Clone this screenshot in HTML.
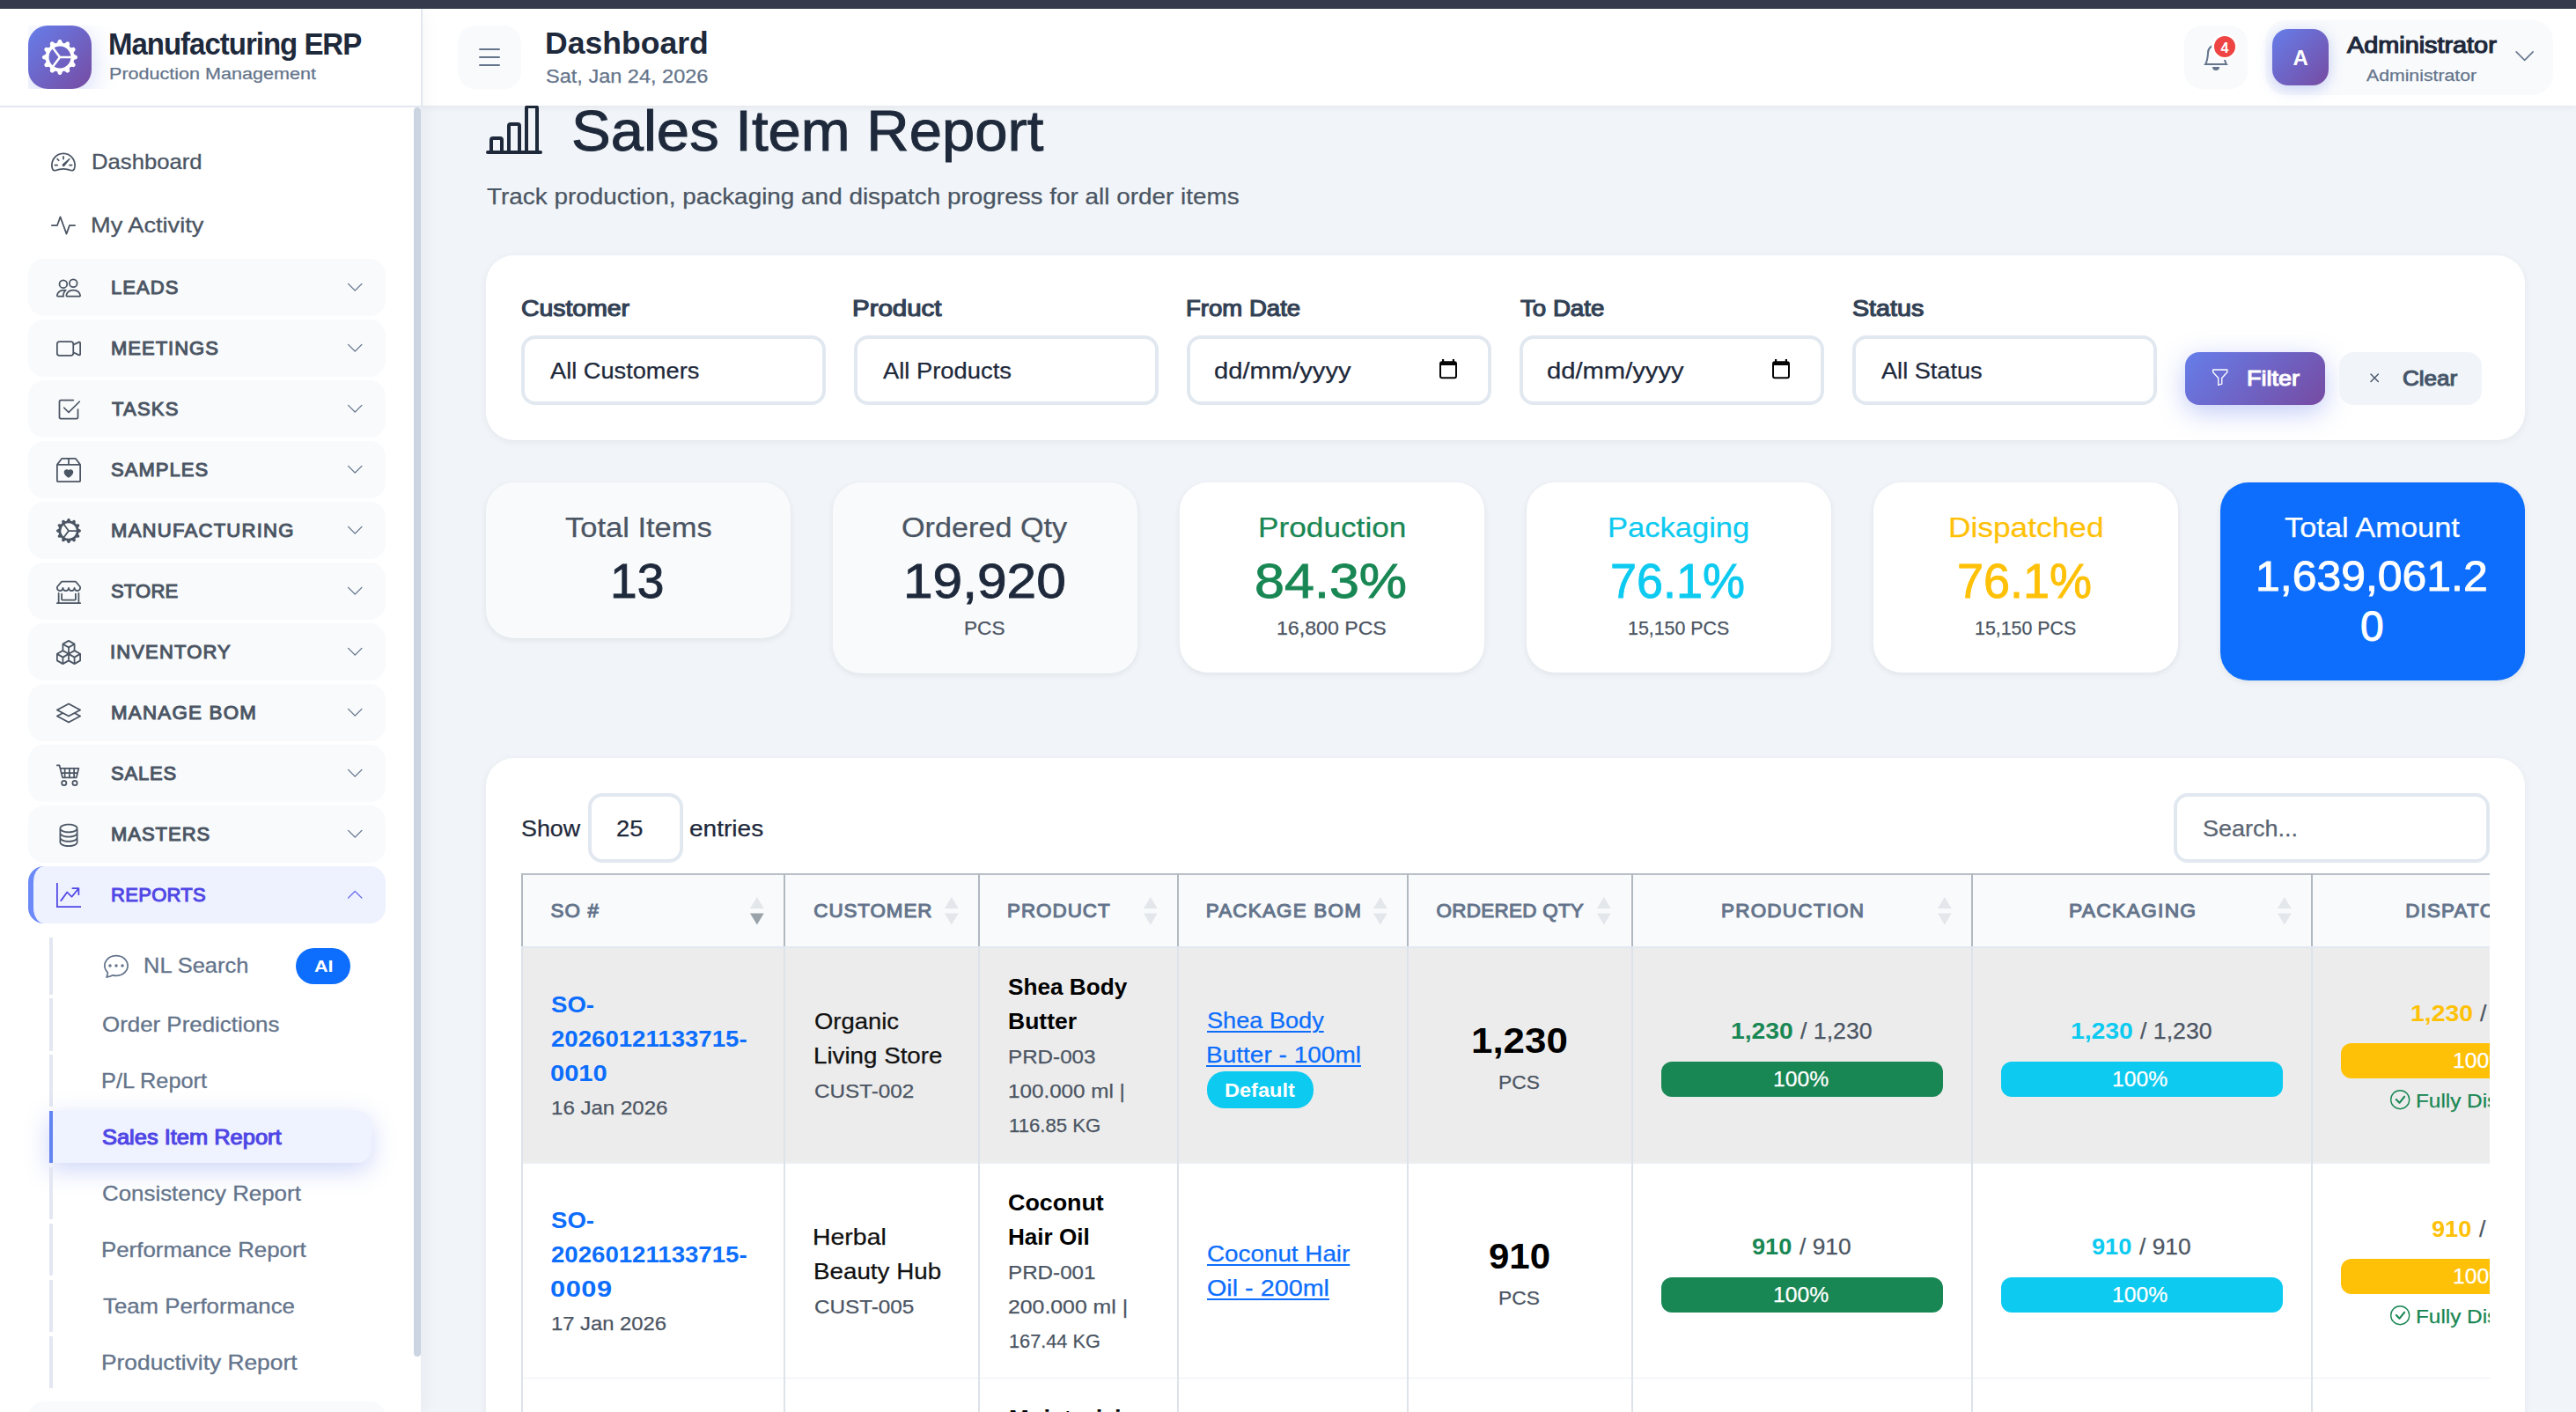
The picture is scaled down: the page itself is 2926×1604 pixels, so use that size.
<!DOCTYPE html>
<html lang="en"><head><meta charset="utf-8"><title>Sales Item Report</title>
<style>
html,body{margin:0;padding:0;}
body{width:2926px;height:1604px;overflow:hidden;position:relative;background:#f1f5f9;font-family:"Liberation Sans",sans-serif;}
.t{position:absolute;white-space:nowrap;transform-origin:0 50%;}
svg{display:block;overflow:visible;}
</style></head><body>
<svg viewBox="0 0 16 16" style="position:absolute;left:552px;top:114.6px;width:64px;height:64px;fill:#1e293b;"><path d="M11 2a1 1 0 0 1 1-1h2a1 1 0 0 1 1 1v12h.5a.5.5 0 0 1 0 1H.5a.5.5 0 0 1 0-1H1v-3a1 1 0 0 1 1-1h2a1 1 0 0 1 1 1v3h1V7a1 1 0 0 1 1-1h2a1 1 0 0 1 1 1v7h1zm1 12h2V2h-2zm-3 0V7H7v7zm-5 0v-3H2v3z"/></svg>
<span class="t" style="left:649.46px;top:117.00px;font-size:64.00px;line-height:64.00px;color:#1e293b;transform:scaleX(1.0472);-webkit-text-stroke:1.0px #1e293b;">Sales Item Report</span>
<span class="t" style="left:553.00px;top:210.00px;font-size:26.40px;line-height:26.40px;color:#4b5563;transform:scaleX(1.0569);-webkit-text-stroke:0.25px #4b5563;">Track production, packaging and dispatch progress for all order items</span>
<div style="position:absolute;left:552px;top:290px;width:2316px;height:210px;background:#fff;border-radius:32px;box-shadow:0 2px 10px rgba(15,23,42,.06);"></div>
<span class="t" style="left:591.59px;top:338.00px;font-size:25.60px;line-height:25.60px;color:#334155;transform:scaleX(1.1091);-webkit-text-stroke:1.17px #334155;">Customer</span>
<div style="position:absolute;left:592px;top:381.2px;width:345.7px;height:78.4px;box-sizing:border-box;border:4px solid #e2e8f0;border-radius:16px;background:#fff;"></div>
<span class="t" style="left:968.40px;top:338.00px;font-size:25.60px;line-height:25.60px;color:#334155;transform:scaleX(1.1512);-webkit-text-stroke:1.17px #334155;">Product</span>
<div style="position:absolute;left:970px;top:381.2px;width:345.7px;height:78.4px;box-sizing:border-box;border:4px solid #e2e8f0;border-radius:16px;background:#fff;"></div>
<span class="t" style="left:1346.55px;top:338.00px;font-size:25.60px;line-height:25.60px;color:#334155;transform:scaleX(1.0763);-webkit-text-stroke:1.17px #334155;">From Date</span>
<div style="position:absolute;left:1348px;top:381.2px;width:345.7px;height:78.4px;box-sizing:border-box;border:4px solid #e2e8f0;border-radius:16px;background:#fff;"></div>
<span class="t" style="left:1726.70px;top:338.00px;font-size:25.60px;line-height:25.60px;color:#334155;transform:scaleX(1.0805);-webkit-text-stroke:1.17px #334155;">To Date</span>
<div style="position:absolute;left:1726px;top:381.2px;width:345.7px;height:78.4px;box-sizing:border-box;border:4px solid #e2e8f0;border-radius:16px;background:#fff;"></div>
<span class="t" style="left:2103.58px;top:338.00px;font-size:25.60px;line-height:25.60px;color:#334155;transform:scaleX(1.1197);-webkit-text-stroke:1.17px #334155;">Status</span>
<div style="position:absolute;left:2104px;top:381.2px;width:345.7px;height:78.4px;box-sizing:border-box;border:4px solid #e2e8f0;border-radius:16px;background:#fff;"></div>
<span class="t" style="left:625.20px;top:409.00px;font-size:25.60px;line-height:25.60px;color:#1e293b;transform:scaleX(1.0629);-webkit-text-stroke:0.25px #1e293b;">All Customers</span>
<span class="t" style="left:1003.40px;top:409.00px;font-size:25.60px;line-height:25.60px;color:#1e293b;transform:scaleX(1.0684);-webkit-text-stroke:0.25px #1e293b;">All Products</span>
<span class="t" style="left:1379.36px;top:409.00px;font-size:25.60px;line-height:25.60px;color:#1e293b;transform:scaleX(1.1397);-webkit-text-stroke:0.25px #1e293b;">dd/mm/yyyy</span>
<span class="t" style="left:1757.36px;top:409.00px;font-size:25.60px;line-height:25.60px;color:#1e293b;transform:scaleX(1.1397);-webkit-text-stroke:0.25px #1e293b;">dd/mm/yyyy</span>
<span class="t" style="left:2136.60px;top:409.00px;font-size:25.60px;line-height:25.60px;color:#1e293b;transform:scaleX(1.0607);-webkit-text-stroke:0.25px #1e293b;">All Status</span>
<svg viewBox="0 0 20 22.2" style="position:absolute;left:1635px;top:407.8px;width:20px;height:22.2px;fill:#050505"><rect x="3" y="0" width="2.2" height="3.5"/><rect x="14.8" y="0" width="2.2" height="3.5"/><path fill-rule="evenodd" d="M3 2.2h14a3 3 0 0 1 3 3v14a3 3 0 0 1-3 3H3a3 3 0 0 1-3-3v-14a3 3 0 0 1 3-3zM2 7v12.2a1 1 0 0 0 1 1h14a1 1 0 0 0 1-1V7z"/></svg>
<svg viewBox="0 0 20 22.2" style="position:absolute;left:2013px;top:407.8px;width:20px;height:22.2px;fill:#050505"><rect x="3" y="0" width="2.2" height="3.5"/><rect x="14.8" y="0" width="2.2" height="3.5"/><path fill-rule="evenodd" d="M3 2.2h14a3 3 0 0 1 3 3v14a3 3 0 0 1-3 3H3a3 3 0 0 1-3-3v-14a3 3 0 0 1 3-3zM2 7v12.2a1 1 0 0 0 1 1h14a1 1 0 0 0 1-1V7z"/></svg>
<div style="position:absolute;left:2482px;top:400px;width:159px;height:60px;background:linear-gradient(135deg,#667eea 0%,#764ba2 100%);border-radius:16px;box-shadow:0 8px 30px rgba(102,126,234,.4);"></div>
<svg viewBox="0 0 16 16" style="position:absolute;left:2511px;top:418px;width:21.5px;height:21.5px;fill:#fff;"><path d="M1.5 1.5A.5.5 0 0 1 2 1h12a.5.5 0 0 1 .5.5v2a.5.5 0 0 1-.128.334L10 8.692V13.5a.5.5 0 0 1-.342.474l-3 1A.5.5 0 0 1 6 14.5V8.692L1.628 3.834A.5.5 0 0 1 1.500 3.500zm1 .5v1.308l4.372 4.858A.5.5 0 0 1 7 8.500v5.306l2-.666V8.500a.5.5 0 0 1 .128-.334L13.500 3.308V2z"/></svg>
<span class="t" style="left:2552.45px;top:418.00px;font-size:24.00px;line-height:24.00px;color:#fff;transform:scaleX(1.1235);-webkit-text-stroke:1.11px #fff;">Filter</span>
<div style="position:absolute;left:2657px;top:400px;width:162px;height:60px;background:#f1f5f9;border-radius:16px;"></div>
<svg viewBox="0 0 16 16" style="position:absolute;left:2685.5px;top:418.3px;width:22.4px;height:22.4px;fill:#475569;"><path d="M4.646 4.646a.5.5 0 0 1 .708 0L8 7.293l2.646-2.647a.5.5 0 0 1 .708.708L8.707 8l2.647 2.646a.5.5 0 0 1-.708.708L8 8.707l-2.646 2.647a.5.5 0 0 1-.708-.708L7.293 8 4.646 5.354a.5.5 0 0 1 0-.708"/></svg>
<span class="t" style="left:2728.51px;top:418.00px;font-size:24.00px;line-height:24.00px;color:#475569;transform:scaleX(1.0857);-webkit-text-stroke:1.11px #475569;">Clear</span>
<div style="position:absolute;left:552px;top:548px;width:345.7px;height:177px;background:#f8fafc;border-radius:32px;box-shadow:0 2px 7px rgba(15,23,42,.08);"></div>
<div style="position:absolute;left:946px;top:548px;width:345.7px;height:216.5px;background:#f8fafc;border-radius:32px;box-shadow:0 2px 7px rgba(15,23,42,.08);"></div>
<div style="position:absolute;left:1340.3px;top:548px;width:345.7px;height:215.7px;background:#fff;border-radius:32px;box-shadow:0 2px 7px rgba(15,23,42,.08);"></div>
<div style="position:absolute;left:1734.2px;top:548px;width:345.7px;height:215.7px;background:#fff;border-radius:32px;box-shadow:0 2px 7px rgba(15,23,42,.08);"></div>
<div style="position:absolute;left:2128.2px;top:548px;width:345.7px;height:215.7px;background:#fff;border-radius:32px;box-shadow:0 2px 7px rgba(15,23,42,.08);"></div>
<div style="position:absolute;left:2522px;top:548px;width:345.7px;height:224.6px;background:#0d6efd;border-radius:32px;box-shadow:0 2px 7px rgba(15,23,42,.08);"></div>
<span class="t" style="left:642.30px;top:583.00px;font-size:32.00px;line-height:32.00px;color:#4b5563;transform:scaleX(1.0779);-webkit-text-stroke:0.25px #4b5563;">Total Items</span>
<span class="t" style="left:692.66px;top:632.00px;font-size:56.00px;line-height:56.00px;color:#1e293b;transform:scaleX(0.9857);-webkit-text-stroke:0.9px #1e293b;">13</span>
<span class="t" style="left:1024.43px;top:583.00px;font-size:32.00px;line-height:32.00px;color:#4b5563;transform:scaleX(1.0686);-webkit-text-stroke:0.25px #4b5563;">Ordered Qty</span>
<span class="t" style="left:1025.68px;top:632.00px;font-size:56.00px;line-height:56.00px;color:#1e293b;transform:scaleX(1.0788);-webkit-text-stroke:0.9px #1e293b;">19,920</span>
<span class="t" style="left:1095.28px;top:703.00px;font-size:22.40px;line-height:22.40px;color:#4b5563;transform:scaleX(1.0093);-webkit-text-stroke:0.25px #4b5563;">PCS</span>
<span class="t" style="left:1428.80px;top:583.00px;font-size:32.00px;line-height:32.00px;color:#198754;transform:scaleX(1.1007);-webkit-text-stroke:0.25px #198754;">Production</span>
<span class="t" style="left:1424.82px;top:632.00px;font-size:56.00px;line-height:56.00px;color:#198754;transform:scaleX(1.0903);-webkit-text-stroke:0.9px #198754;">84.3%</span>
<span class="t" style="left:1449.97px;top:703.00px;font-size:22.40px;line-height:22.40px;color:#4b5563;transform:scaleX(1.0336);-webkit-text-stroke:0.25px #4b5563;">16,800 PCS</span>
<span class="t" style="left:1826.39px;top:583.00px;font-size:32.00px;line-height:32.00px;color:#0dcaf0;transform:scaleX(1.0788);-webkit-text-stroke:0.25px #0dcaf0;">Packaging</span>
<span class="t" style="left:1828.66px;top:632.00px;font-size:56.00px;line-height:56.00px;color:#0dcaf0;transform:scaleX(0.9643);-webkit-text-stroke:0.9px #0dcaf0;">76.1%</span>
<span class="t" style="left:1849.05px;top:703.00px;font-size:22.40px;line-height:22.40px;color:#4b5563;transform:scaleX(0.9546);-webkit-text-stroke:0.25px #4b5563;">15,150 PCS</span>
<span class="t" style="left:2212.79px;top:583.00px;font-size:32.00px;line-height:32.00px;color:#ffc107;transform:scaleX(1.1026);-webkit-text-stroke:0.25px #ffc107;">Dispatched</span>
<span class="t" style="left:2222.66px;top:632.00px;font-size:56.00px;line-height:56.00px;color:#ffc107;transform:scaleX(0.9643);-webkit-text-stroke:0.9px #ffc107;">76.1%</span>
<span class="t" style="left:2243.05px;top:703.00px;font-size:22.40px;line-height:22.40px;color:#4b5563;transform:scaleX(0.9546);-webkit-text-stroke:0.25px #4b5563;">15,150 PCS</span>
<span class="t" style="left:2594.90px;top:583.00px;font-size:32.00px;line-height:32.00px;color:#fff;transform:scaleX(1.0749);-webkit-text-stroke:0.25px #fff;">Total Amount</span>
<span class="t" style="left:2561.88px;top:631.00px;font-size:48.00px;line-height:48.00px;color:#fff;transform:scaleX(1.0402);-webkit-text-stroke:0.9px #fff;">1,639,061.2</span>
<span class="t" style="left:2681.00px;top:688.00px;font-size:48.00px;line-height:48.00px;color:#fff;-webkit-text-stroke:0.9px #fff;">0</span>
<div style="position:absolute;left:552px;top:860.6px;width:2316px;height:800px;background:#fff;border-radius:32px;box-shadow:0 2px 10px rgba(15,23,42,.06);"></div>
<span class="t" style="left:591.95px;top:929.00px;font-size:25.60px;line-height:25.60px;color:#1e293b;transform:scaleX(1.0476);-webkit-text-stroke:0.25px #1e293b;">Show</span>
<div style="position:absolute;left:668px;top:901px;width:108px;height:79px;box-sizing:border-box;border:4px solid #e2e8f0;border-radius:16px;background:#fff;"></div>
<span class="t" style="left:699.83px;top:929.00px;font-size:25.60px;line-height:25.60px;color:#1e293b;transform:scaleX(1.0667);-webkit-text-stroke:0.25px #1e293b;">25</span>
<span class="t" style="left:782.70px;top:929.00px;font-size:25.60px;line-height:25.60px;color:#1e293b;transform:scaleX(1.0960);-webkit-text-stroke:0.25px #1e293b;">entries</span>
<div style="position:absolute;left:2469.2px;top:901px;width:358.6px;height:79px;box-sizing:border-box;border:4px solid #e2e8f0;border-radius:16px;background:#fff;"></div>
<span class="t" style="left:2501.54px;top:929.00px;font-size:25.60px;line-height:25.60px;color:#5b6573;transform:scaleX(1.0556);-webkit-text-stroke:0.25px #5b6573;">Search...</span>
<div style="position:absolute;left:592px;top:992px;width:2236px;height:620px;overflow:hidden;">
<div style="position:absolute;left:0px;top:0px;width:2500px;height:83.4px;background:#f8fafc;"></div>
<div style="position:absolute;left:0px;top:83.4px;width:2500px;height:245.1px;background:#ececec;"></div>
<div style="position:absolute;left:0px;top:328.5px;width:2500px;height:244.5px;background:#fff;"></div>
<div style="position:absolute;left:0px;top:573px;width:2500px;height:245px;background:#fff;"></div>
<div style="position:absolute;left:0px;top:328.1px;width:2500px;height:1.7px;background:#eceff4;"></div>
<div style="position:absolute;left:0px;top:572.6px;width:2500px;height:1.7px;background:#eceff4;"></div>
<div style="position:absolute;left:0px;top:817.6px;width:2500px;height:1.7px;background:#eceff4;"></div>
<div style="position:absolute;left:0px;top:0.2px;width:2500px;height:2px;background:#b9c0c7;"></div>
<div style="position:absolute;left:0px;top:83px;width:2500px;height:2px;background:#e2e8f0;"></div>
<div style="position:absolute;left:0px;top:0px;width:2px;height:83px;background:#b2b9c1;"></div>
<div style="position:absolute;left:0px;top:85px;width:2px;height:600px;background:#dde3ea;"></div>
<div style="position:absolute;left:298px;top:0px;width:2px;height:83px;background:#b2b9c1;"></div>
<div style="position:absolute;left:298px;top:85px;width:2px;height:600px;background:#dde3ea;"></div>
<div style="position:absolute;left:519px;top:0px;width:2px;height:83px;background:#b2b9c1;"></div>
<div style="position:absolute;left:519px;top:85px;width:2px;height:600px;background:#dde3ea;"></div>
<div style="position:absolute;left:745px;top:0px;width:2px;height:83px;background:#b2b9c1;"></div>
<div style="position:absolute;left:745px;top:85px;width:2px;height:600px;background:#dde3ea;"></div>
<div style="position:absolute;left:1006.2px;top:0px;width:2px;height:83px;background:#b2b9c1;"></div>
<div style="position:absolute;left:1006.2px;top:85px;width:2px;height:600px;background:#dde3ea;"></div>
<div style="position:absolute;left:1261.4px;top:0px;width:2px;height:83px;background:#b2b9c1;"></div>
<div style="position:absolute;left:1261.4px;top:85px;width:2px;height:600px;background:#dde3ea;"></div>
<div style="position:absolute;left:1647.2px;top:0px;width:2px;height:83px;background:#b2b9c1;"></div>
<div style="position:absolute;left:1647.2px;top:85px;width:2px;height:600px;background:#dde3ea;"></div>
<div style="position:absolute;left:2033px;top:0px;width:2px;height:83px;background:#b2b9c1;"></div>
<div style="position:absolute;left:2033px;top:85px;width:2px;height:600px;background:#dde3ea;"></div>
<div style="position:absolute;left:2420px;top:0px;width:2px;height:83px;background:#b2b9c1;"></div>
<div style="position:absolute;left:2420px;top:85px;width:2px;height:600px;background:#dde3ea;"></div>
</div>
<span class="t" style="left:625.40px;top:1024.00px;font-size:22.40px;line-height:22.40px;color:#64748b;letter-spacing:1.200px;-webkit-text-stroke:1.06px #64748b;">SO #</span>
<svg viewBox="0 0 15.7 32" style="position:absolute;left:852.3px;top:1018.7px;width:15.7px;height:32px"><path d="M7.85 0 L15.7 13.1 L0 13.1Z" fill="#e3e6ea"/><path d="M0 18.4 L15.7 18.4 L7.85 31.6Z" fill="#9aa2a9"/></svg>
<span class="t" style="left:924.30px;top:1024.00px;font-size:22.40px;line-height:22.40px;color:#64748b;letter-spacing:0.914px;-webkit-text-stroke:1.06px #64748b;">CUSTOMER</span>
<svg viewBox="0 0 15.7 32" style="position:absolute;left:1072.9px;top:1018.7px;width:15.7px;height:32px"><path d="M7.85 0 L15.7 13.1 L0 13.1Z" fill="#e3e6ea"/><path d="M0 18.4 L15.7 18.4 L7.85 31.6Z" fill="#e3e6ea"/></svg>
<span class="t" style="left:1144.00px;top:1024.00px;font-size:22.40px;line-height:22.40px;color:#64748b;letter-spacing:1.000px;-webkit-text-stroke:1.06px #64748b;">PRODUCT</span>
<svg viewBox="0 0 15.7 32" style="position:absolute;left:1299.1px;top:1018.7px;width:15.7px;height:32px"><path d="M7.85 0 L15.7 13.1 L0 13.1Z" fill="#e3e6ea"/><path d="M0 18.4 L15.7 18.4 L7.85 31.6Z" fill="#e3e6ea"/></svg>
<span class="t" style="left:1369.70px;top:1024.00px;font-size:22.40px;line-height:22.40px;color:#64748b;letter-spacing:1.232px;-webkit-text-stroke:1.06px #64748b;">PACKAGE BOM</span>
<svg viewBox="0 0 15.7 32" style="position:absolute;left:1559.9px;top:1018.7px;width:15.7px;height:32px"><path d="M7.85 0 L15.7 13.1 L0 13.1Z" fill="#e3e6ea"/><path d="M0 18.4 L15.7 18.4 L7.85 31.6Z" fill="#e3e6ea"/></svg>
<span class="t" style="left:1631.60px;top:1024.00px;font-size:22.40px;line-height:22.40px;color:#64748b;letter-spacing:0.300px;-webkit-text-stroke:1.06px #64748b;">ORDERED QTY</span>
<svg viewBox="0 0 15.7 32" style="position:absolute;left:1814.3px;top:1018.7px;width:15.7px;height:32px"><path d="M7.85 0 L15.7 13.1 L0 13.1Z" fill="#e3e6ea"/><path d="M0 18.4 L15.7 18.4 L7.85 31.6Z" fill="#e3e6ea"/></svg>
<span class="t" style="left:1954.99px;top:1024.00px;font-size:22.40px;line-height:22.40px;color:#64748b;letter-spacing:1.232px;transform:scaleX(1.0026);-webkit-text-stroke:1.06px #64748b;">PRODUCTION</span>
<svg viewBox="0 0 15.7 32" style="position:absolute;left:2200.8px;top:1018.7px;width:15.7px;height:32px"><path d="M7.85 0 L15.7 13.1 L0 13.1Z" fill="#e3e6ea"/><path d="M0 18.4 L15.7 18.4 L7.85 31.6Z" fill="#e3e6ea"/></svg>
<span class="t" style="left:2349.96px;top:1024.00px;font-size:22.40px;line-height:22.40px;color:#64748b;letter-spacing:1.232px;transform:scaleX(1.0199);-webkit-text-stroke:1.06px #64748b;">PACKAGING</span>
<svg viewBox="0 0 15.7 32" style="position:absolute;left:2586.5px;top:1018.7px;width:15.7px;height:32px"><path d="M7.85 0 L15.7 13.1 L0 13.1Z" fill="#e3e6ea"/><path d="M0 18.4 L15.7 18.4 L7.85 31.6Z" fill="#e3e6ea"/></svg>
<div style="position:absolute;left:2627px;top:994px;width:201px;height:620px;overflow:hidden;">
<span class="t" style="left:105.30px;top:30.00px;font-size:22.40px;line-height:22.40px;color:#64748b;letter-spacing:1.156px;-webkit-text-stroke:1.06px #64748b;">DISPATCHED</span>
</div>
<span class="t" style="left:625.52px;top:1129.00px;font-size:25.60px;line-height:25.60px;color:#0d6efd;font-weight:700;transform:scaleX(1.0773);">SO-</span>
<span class="t" style="left:625.52px;top:1168.00px;font-size:25.60px;line-height:25.60px;color:#0d6efd;font-weight:700;transform:scaleX(1.0785);">20260121133715-</span>
<span class="t" style="left:625.46px;top:1207.00px;font-size:25.60px;line-height:25.60px;color:#0d6efd;font-weight:700;transform:scaleX(1.1364);">0010</span>
<span class="t" style="left:625.53px;top:1248.00px;font-size:22.40px;line-height:22.40px;color:#4b5563;transform:scaleX(1.0744);-webkit-text-stroke:0.25px #4b5563;">16 Jan 2026</span>
<span class="t" style="left:924.53px;top:1148.00px;font-size:25.60px;line-height:25.60px;color:#111;transform:scaleX(1.0716);-webkit-text-stroke:0.25px #111;">Organic</span>
<span class="t" style="left:923.83px;top:1187.00px;font-size:25.60px;line-height:25.60px;color:#111;transform:scaleX(1.0833);-webkit-text-stroke:0.25px #111;">Living Store</span>
<span class="t" style="left:924.52px;top:1229.00px;font-size:22.40px;line-height:22.40px;color:#4b5563;transform:scaleX(1.0835);-webkit-text-stroke:0.25px #4b5563;">CUST-002</span>
<span class="t" style="left:1144.98px;top:1109.00px;font-size:25.60px;line-height:25.60px;color:#000;font-weight:700;transform:scaleX(1.0229);">Shea Body</span>
<span class="t" style="left:1145.46px;top:1148.00px;font-size:25.60px;line-height:25.60px;color:#000;font-weight:700;transform:scaleX(1.0365);">Butter</span>
<span class="t" style="left:1144.64px;top:1190.00px;font-size:22.40px;line-height:22.40px;color:#4b5563;transform:scaleX(1.0809);-webkit-text-stroke:0.25px #4b5563;">PRD-003</span>
<span class="t" style="left:1145.42px;top:1229.00px;font-size:22.40px;line-height:22.40px;color:#4b5563;transform:scaleX(1.0817);-webkit-text-stroke:0.25px #4b5563;">100.000 ml |</span>
<span class="t" style="left:1145.51px;top:1268.00px;font-size:22.40px;line-height:22.40px;color:#4b5563;transform:scaleX(0.9883);-webkit-text-stroke:0.25px #4b5563;">116.85 KG</span>
<span class="t" style="left:1370.74px;top:1147.00px;font-size:25.60px;line-height:25.60px;color:#0d6efd;transform:scaleX(1.0597);-webkit-text-stroke:0.25px #0d6efd;text-decoration:underline;text-decoration-thickness:2.2px;text-underline-offset:2.5px;">Shea Body</span>
<span class="t" style="left:1369.61px;top:1186.00px;font-size:25.60px;line-height:25.60px;color:#0d6efd;transform:scaleX(1.0949);-webkit-text-stroke:0.25px #0d6efd;text-decoration:underline;text-decoration-thickness:2.2px;text-underline-offset:2.5px;">Butter - 100ml</span>
<div style="position:absolute;left:1371px;top:1216.9px;width:121.1px;height:42.4px;background:#0dcaf0;border-radius:20px;"></div>
<span class="t" style="left:1391.05px;top:1228.00px;font-size:22.40px;line-height:22.40px;color:#fff;font-weight:700;transform:scaleX(1.0520);">Default</span>
<span class="t" style="left:1670.71px;top:1162.00px;font-size:40.00px;line-height:40.00px;color:#000;font-weight:700;transform:scaleX(1.0969);">1,230</span>
<span class="t" style="left:1702.26px;top:1219.00px;font-size:22.40px;line-height:22.40px;color:#4b5563;transform:scaleX(1.0186);-webkit-text-stroke:0.25px #4b5563;">PCS</span>
<span class="t" style="left:1965.94px;top:1159.00px;font-size:25.60px;line-height:25.60px;color:#198754;font-weight:700;transform:scaleX(1.1065);">1,230</span>
<span class="t" style="left:2044.85px;top:1159.00px;font-size:25.60px;line-height:25.60px;color:#4b5563;transform:scaleX(1.0423);-webkit-text-stroke:0.25px #4b5563;">/ 1,230</span>
<div style="position:absolute;left:1886.7px;top:1205.9px;width:320.5px;height:40px;background:#198754;border-radius:12px;"></div>
<span class="t" style="left:2013.54px;top:1214.00px;font-size:24.00px;line-height:24.00px;color:#fff;transform:scaleX(1.0305);-webkit-text-stroke:0.25px #fff;">100%</span>
<span class="t" style="left:2351.74px;top:1159.00px;font-size:25.60px;line-height:25.60px;color:#0dcaf0;font-weight:700;transform:scaleX(1.1065);">1,230</span>
<span class="t" style="left:2430.65px;top:1159.00px;font-size:25.60px;line-height:25.60px;color:#4b5563;transform:scaleX(1.0423);-webkit-text-stroke:0.25px #4b5563;">/ 1,230</span>
<div style="position:absolute;left:2272.5px;top:1205.9px;width:320.5px;height:40px;background:#0dcaf0;border-radius:12px;"></div>
<span class="t" style="left:2399.34px;top:1214.00px;font-size:24.00px;line-height:24.00px;color:#fff;transform:scaleX(1.0305);-webkit-text-stroke:0.25px #fff;">100%</span>
<span class="t" style="left:625.52px;top:1374.00px;font-size:25.60px;line-height:25.60px;color:#0d6efd;font-weight:700;transform:scaleX(1.0773);">SO-</span>
<span class="t" style="left:625.52px;top:1413.00px;font-size:25.60px;line-height:25.60px;color:#0d6efd;font-weight:700;transform:scaleX(1.0785);">20260121133715-</span>
<span class="t" style="left:625.40px;top:1452.00px;font-size:25.60px;line-height:25.60px;color:#0d6efd;font-weight:700;letter-spacing:0.500px;transform:scaleX(1.2000);">0009</span>
<span class="t" style="left:625.54px;top:1493.00px;font-size:22.40px;line-height:22.40px;color:#4b5563;transform:scaleX(1.0636);-webkit-text-stroke:0.25px #4b5563;">17 Jan 2026</span>
<span class="t" style="left:923.38px;top:1393.00px;font-size:25.60px;line-height:25.60px;color:#111;transform:scaleX(1.1111);-webkit-text-stroke:0.25px #111;">Herbal</span>
<span class="t" style="left:923.83px;top:1432.00px;font-size:25.60px;line-height:25.60px;color:#111;transform:scaleX(1.0847);-webkit-text-stroke:0.25px #111;">Beauty Hub</span>
<span class="t" style="left:924.52px;top:1474.00px;font-size:22.40px;line-height:22.40px;color:#4b5563;transform:scaleX(1.0835);-webkit-text-stroke:0.25px #4b5563;">CUST-005</span>
<span class="t" style="left:1144.95px;top:1354.00px;font-size:25.60px;line-height:25.60px;color:#000;font-weight:700;transform:scaleX(1.0485);">Coconut</span>
<span class="t" style="left:1145.48px;top:1393.00px;font-size:25.60px;line-height:25.60px;color:#000;font-weight:700;transform:scaleX(1.0191);">Hair Oil</span>
<span class="t" style="left:1144.64px;top:1435.00px;font-size:22.40px;line-height:22.40px;color:#4b5563;transform:scaleX(1.0809);-webkit-text-stroke:0.25px #4b5563;">PRD-001</span>
<span class="t" style="left:1145.39px;top:1474.00px;font-size:22.40px;line-height:22.40px;color:#4b5563;transform:scaleX(1.1083);-webkit-text-stroke:0.25px #4b5563;">200.000 ml |</span>
<span class="t" style="left:1145.53px;top:1513.00px;font-size:22.40px;line-height:22.40px;color:#4b5563;transform:scaleX(0.9695);-webkit-text-stroke:0.25px #4b5563;">167.44 KG</span>
<span class="t" style="left:1370.71px;top:1412.00px;font-size:25.60px;line-height:25.60px;color:#0d6efd;transform:scaleX(1.0865);-webkit-text-stroke:0.25px #0d6efd;text-decoration:underline;text-decoration-thickness:2.2px;text-underline-offset:2.5px;">Coconut Hair</span>
<span class="t" style="left:1370.68px;top:1451.00px;font-size:25.60px;line-height:25.60px;color:#0d6efd;transform:scaleX(1.1231);-webkit-text-stroke:0.25px #0d6efd;text-decoration:underline;text-decoration-thickness:2.2px;text-underline-offset:2.5px;">Oil - 200ml</span>
<span class="t" style="left:1691.45px;top:1407.00px;font-size:40.00px;line-height:40.00px;color:#000;font-weight:700;transform:scaleX(1.0500);">910</span>
<span class="t" style="left:1702.26px;top:1464.00px;font-size:22.40px;line-height:22.40px;color:#4b5563;transform:scaleX(1.0186);-webkit-text-stroke:0.25px #4b5563;">PCS</span>
<span class="t" style="left:1990.39px;top:1404.00px;font-size:25.60px;line-height:25.60px;color:#198754;font-weight:700;transform:scaleX(1.0610);">910</span>
<span class="t" style="left:2044.15px;top:1404.00px;font-size:25.60px;line-height:25.60px;color:#4b5563;transform:scaleX(1.0286);-webkit-text-stroke:0.25px #4b5563;">/ 910</span>
<div style="position:absolute;left:1886.7px;top:1450.9px;width:320.5px;height:40px;background:#198754;border-radius:12px;"></div>
<span class="t" style="left:2013.54px;top:1459.00px;font-size:24.00px;line-height:24.00px;color:#fff;transform:scaleX(1.0305);-webkit-text-stroke:0.25px #fff;">100%</span>
<span class="t" style="left:2376.19px;top:1404.00px;font-size:25.60px;line-height:25.60px;color:#0dcaf0;font-weight:700;transform:scaleX(1.0610);">910</span>
<span class="t" style="left:2429.95px;top:1404.00px;font-size:25.60px;line-height:25.60px;color:#4b5563;transform:scaleX(1.0286);-webkit-text-stroke:0.25px #4b5563;">/ 910</span>
<div style="position:absolute;left:2272.5px;top:1450.9px;width:320.5px;height:40px;background:#0dcaf0;border-radius:12px;"></div>
<span class="t" style="left:2399.34px;top:1459.00px;font-size:24.00px;line-height:24.00px;color:#fff;transform:scaleX(1.0305);-webkit-text-stroke:0.25px #fff;">100%</span>
<div style="position:absolute;left:2627px;top:1076px;width:201px;height:560px;overflow:hidden;">
<span class="t" style="left:110.79px;top:63.00px;font-size:25.60px;line-height:25.60px;color:#ffc107;font-weight:700;transform:scaleX(1.1097);">1,230</span>
<span class="t" style="left:189.90px;top:63.00px;font-size:25.60px;line-height:25.60px;color:#4b5563;transform:scaleX(1.0410);-webkit-text-stroke:0.25px #4b5563;">/ 1,230</span>
<div style="position:absolute;left:32.1px;top:108.7px;width:319px;height:40.3px;background:#ffc107;border-radius:12px;"></div>
<span class="t" style="left:159.04px;top:117.00px;font-size:24.00px;line-height:24.00px;color:#fff;transform:scaleX(1.0305);-webkit-text-stroke:0.25px #fff;">100%</span>
<svg viewBox="0 0 16 16" style="position:absolute;left:88.2px;top:162.3px;width:22.4px;height:22.4px;fill:#198754"><path d="M8 15A7 7 0 1 1 8 1a7 7 0 0 1 0 14m0 1A8 8 0 1 0 8 0a8 8 0 0 0 0 16"/><path d="m10.970 4.970-.02.022-3.473 4.425-2.093-2.094a.75.75 0 0 0-1.060 1.060L6.970 11.030a.75.75 0 0 0 1.079-.020l3.992-4.990a.75.75 0 0 0-1.071-1.050"/></svg>
<span class="t" style="left:116.63px;top:164.00px;font-size:22.40px;line-height:22.40px;color:#198754;transform:scaleX(1.0864);-webkit-text-stroke:0.25px #198754;">Fully Dispatched</span>
<span class="t" style="left:135.29px;top:308.00px;font-size:25.60px;line-height:25.60px;color:#ffc107;font-weight:700;transform:scaleX(1.0610);">910</span>
<span class="t" style="left:189.05px;top:308.00px;font-size:25.60px;line-height:25.60px;color:#4b5563;transform:scaleX(1.0286);-webkit-text-stroke:0.25px #4b5563;">/ 910</span>
<div style="position:absolute;left:32.1px;top:353.7px;width:319px;height:40.3px;background:#ffc107;border-radius:12px;"></div>
<span class="t" style="left:159.04px;top:362.00px;font-size:24.00px;line-height:24.00px;color:#fff;transform:scaleX(1.0305);-webkit-text-stroke:0.25px #fff;">100%</span>
<svg viewBox="0 0 16 16" style="position:absolute;left:88.2px;top:407.3px;width:22.4px;height:22.4px;fill:#198754"><path d="M8 15A7 7 0 1 1 8 1a7 7 0 0 1 0 14m0 1A8 8 0 1 0 8 0a8 8 0 0 0 0 16"/><path d="m10.970 4.970-.02.022-3.473 4.425-2.093-2.094a.75.75 0 0 0-1.060 1.060L6.970 11.030a.75.75 0 0 0 1.079-.020l3.992-4.990a.75.75 0 0 0-1.071-1.050"/></svg>
<span class="t" style="left:116.63px;top:409.00px;font-size:22.40px;line-height:22.40px;color:#198754;transform:scaleX(1.0864);-webkit-text-stroke:0.25px #198754;">Fully Dispatched</span>
</div>
<span class="t" style="left:1145.93px;top:1599.00px;font-size:25.60px;line-height:25.60px;color:#000;font-weight:700;transform:scaleX(1.0676);">Moisturizing</span>
<div style="position:absolute;left:480px;top:10px;width:2446px;height:110px;background:#fff;box-shadow:0 2px 8px rgba(15,23,42,.06);"></div>
<div style="position:absolute;left:520px;top:29px;width:72px;height:72px;background:#f8fafc;border-radius:20px;"></div>
<div style="position:absolute;left:544px;top:54.5px;width:24px;height:2.2px;background:#64748b;border-radius:1px;"></div>
<div style="position:absolute;left:544px;top:63.9px;width:24px;height:2.2px;background:#64748b;border-radius:1px;"></div>
<div style="position:absolute;left:544px;top:73.2px;width:24px;height:2.2px;background:#64748b;border-radius:1px;"></div>
<span class="t" style="left:618.98px;top:31.00px;font-size:35.20px;line-height:35.20px;color:#1e293b;font-weight:700;transform:scaleX(1.0111);">Dashboard</span>
<span class="t" style="left:619.91px;top:76.00px;font-size:21.60px;line-height:21.60px;color:#64748b;transform:scaleX(1.0893);-webkit-text-stroke:0.25px #64748b;">Sat, Jan 24, 2026</span>
<div style="position:absolute;left:2481px;top:29px;width:72px;height:72px;background:#f8fafc;border-radius:20px;"></div>
<svg viewBox="0 0 16 16" style="position:absolute;left:2501px;top:47.7px;width:32px;height:32px;fill:#64748b;"><path d="M8 16a2 2 0 0 0 2-2H6a2 2 0 0 0 2 2M8 1.918l-.797.161A4 4 0 0 0 4 6c0 .628-.134 2.197-.459 3.742-.16.767-.376 1.566-.663 2.258h10.244c-.287-.692-.502-1.49-.663-2.258C12.134 8.197 12 6.628 12 6a4 4 0 0 0-3.203-3.92zM14.22 12c.223.447.481.801.78 1H1c.299-.199.557-.553.78-1C2.68 10.2 3 6.88 3 6c0-2.42 1.72-4.44 4.005-4.901a1 1 0 1 1 1.99 0A5 5 0 0 1 13 6c0 .88.32 4.2 1.22 6"/></svg>
<div style="position:absolute;left:2512px;top:38px;width:30px;height:30px;background:#ef4444;border:3px solid #fff;border-radius:50%;box-sizing:border-box;"></div>
<span class="t" style="left:2522.50px;top:47.00px;font-size:16.00px;line-height:16.00px;color:#fff;font-weight:700;">4</span>
<div style="position:absolute;left:2573px;top:23px;width:327px;height:84.6px;background:#f8fafc;border-radius:24px;"></div>
<div style="position:absolute;left:2581px;top:33px;width:64px;height:64px;background:linear-gradient(135deg,#667eea 0%,#764ba2 100%);border-radius:18px;box-shadow:0 4px 16px rgba(102,126,234,.35);"></div>
<span class="t" style="left:2604.50px;top:54.00px;font-size:24.00px;line-height:24.00px;color:#fff;font-weight:700;">A</span>
<span class="t" style="left:2665.70px;top:39.00px;font-size:25.60px;line-height:25.60px;color:#1e293b;transform:scaleX(1.1258);-webkit-text-stroke:1.17px #1e293b;">Administrator</span>
<span class="t" style="left:2688.00px;top:76.00px;font-size:19.20px;line-height:19.20px;color:#64748b;transform:scaleX(1.1062);-webkit-text-stroke:0.25px #64748b;">Administrator</span>
<svg viewBox="0 0 16 16" style="position:absolute;left:2855.4px;top:51px;width:25.3px;height:25.3px;fill:#64748b;"><path fill-rule="evenodd" d="M1.646 4.646a.5.5 0 0 1 .708 0L8 10.293l5.646-5.647a.5.5 0 0 1 .708.708l-6 6a.5.5 0 0 1-.708 0l-6-6a.5.5 0 0 1 0-.708"/></svg>
<div style="position:absolute;left:0;top:10px;width:478px;height:1594px;background:#fff;box-shadow:4px 0 18px rgba(15,23,42,.045);"></div>
<div style="position:absolute;left:478px;top:10px;width:2px;height:112px;background:#e2e8f0;"></div>
<div style="position:absolute;left:0px;top:120px;width:478px;height:2px;background:#e2e8f0;"></div>
<div style="position:absolute;left:32px;top:29px;width:103px;height:72px;overflow:hidden;"><div style="width:72px;height:72px;background:linear-gradient(135deg,#667eea 0%,#764ba2 100%);border-radius:22px;box-shadow:0 8px 30px rgba(102,126,234,.3);"></div></div>
<svg viewBox="0 0 16 16" style="position:absolute;left:48px;top:45px;width:40px;height:40px;fill:#fff;"><path d="M7.068.727c.243-.97 1.62-.97 1.864 0l.071.286a.96.96 0 0 0 1.622.434l.205-.211c.695-.719 1.888-.03 1.613.931l-.08.284a.96.96 0 0 0 1.187 1.187l.283-.081c.96-.275 1.65.918.931 1.613l-.211.205a.96.96 0 0 0 .434 1.622l.286.071c.97.243.97 1.62 0 1.864l-.286.071a.96.96 0 0 0-.434 1.622l.211.205c.719.695.03 1.888-.931 1.613l-.284-.08a.96.96 0 0 0-1.187 1.187l.081.283c.275.96-.918 1.65-1.613.931l-.205-.211a.96.96 0 0 0-1.622.434l-.071.286c-.243.97-1.62.97-1.864 0l-.071-.286a.96.96 0 0 0-1.622-.434l-.205.211c-.695.719-1.888.03-1.613-.931l.08-.284a.96.96 0 0 0-1.186-1.187l-.284.081c-.96.275-1.65-.918-.931-1.613l.211-.205a.96.96 0 0 0-.434-1.622l-.286-.071c-.97-.243-.97-1.62 0-1.864l.286-.071a.96.96 0 0 0 .434-1.622l-.211-.205c-.719-.695-.03-1.888.931-1.613l.284.08a.96.96 0 0 0 1.187-1.186l-.081-.284c-.275-.96.918-1.65 1.613-.931l.205.211a.96.96 0 0 0 1.622-.434zM12.973 8.5H8.25l-2.834 3.779A4.998 4.998 0 0 0 12.973 8.5m0-1a4.998 4.998 0 0 0-7.557-3.779l2.834 3.78zM5.048 3.967l-.087.065zm-.431.355A4.98 4.98 0 0 0 3.002 8c0 1.455.622 2.765 1.615 3.678L7.375 8zm.344 7.646.087.065z"/></svg>
<span class="t" style="left:123.14px;top:33.00px;font-size:35.50px;line-height:35.50px;color:#1e293b;font-weight:700;letter-spacing:-1.065px;transform:scaleX(0.9285);">Manufacturing ERP</span>
<span class="t" style="left:123.88px;top:74.00px;font-size:19.20px;line-height:19.20px;color:#64748b;transform:scaleX(1.1236);-webkit-text-stroke:0.25px #64748b;">Production Management</span>
<div style="position:absolute;left:470px;top:122px;width:8px;height:1419px;background:#cbd5e1;border-radius:4px;"></div>
<svg viewBox="0 0 16 16" style="position:absolute;left:58.1px;top:170.1px;width:28px;height:28px;fill:#4b5563;"><path d="M8 4a.5.5 0 0 1 .5.5V6a.5.5 0 0 1-1 0V4.5A.5.5 0 0 1 8 4M3.732 5.732a.5.5 0 0 1 .707 0l.915.914a.5.5 0 1 1-.708.708l-.914-.915a.5.5 0 0 1 0-.707M2 10a.5.5 0 0 1 .5-.5h1.586a.5.5 0 0 1 0 1H2.5A.5.5 0 0 1 2 10m9.5 0a.5.5 0 0 1 .5-.5h1.5a.5.5 0 0 1 0 1H12a.5.5 0 0 1-.5-.5m.754-4.246a.39.39 0 0 0-.527-.02L7.547 9.31a.91.91 0 1 0 1.302 1.258l3.434-4.297a.39.39 0 0 0-.029-.518z"/><path fill-rule="evenodd" d="M0 10a8 8 0 1 1 15.547 2.661c-.442 1.253-1.845 1.602-2.932 1.25C11.309 13.488 9.475 13 8 13c-1.474 0-3.31.488-4.615.911-1.087.352-2.49.003-2.932-1.25A8 8 0 0 1 0 10m8-7a7 7 0 0 0-6.603 9.329c.203.575.923.876 1.68.63C4.397 12.533 6.358 12 8 12s3.604.532 4.923.96c.757.245 1.477-.056 1.68-.631A7 7 0 0 0 8 3"/></svg>
<span class="t" style="left:103.56px;top:172.00px;font-size:24.00px;line-height:24.00px;color:#4b5563;transform:scaleX(1.0693);-webkit-text-stroke:0.3px #4b5563;">Dashboard</span>
<svg viewBox="0 0 16 16" style="position:absolute;left:58.1px;top:241.6px;width:28px;height:28px;fill:#4b5563;"><path fill-rule="evenodd" d="M6 2a.5.5 0 0 1 .47.33L10 12.036l1.53-4.208A.5.5 0 0 1 12 7.5h3.5a.5.5 0 0 1 0 1h-3.15l-1.88 5.17a.5.5 0 0 1-.94 0L6 3.964 4.47 8.171A.5.5 0 0 1 4 8.5H.5a.5.5 0 0 1 0-1h3.15l1.88-5.17A.5.5 0 0 1 6 2"/></svg>
<span class="t" style="left:103.43px;top:244.00px;font-size:24.00px;line-height:24.00px;color:#4b5563;transform:scaleX(1.1327);-webkit-text-stroke:0.3px #4b5563;">My Activity</span>
<div style="position:absolute;left:32px;top:294px;width:406px;height:64.7px;background:#f8fafc;border-radius:18px;"></div>
<svg viewBox="0 0 16 16" style="position:absolute;left:64px;top:312.95px;width:28px;height:28px;fill:#4b5563;"><path d="M15 14s1 0 1-1-1-4-5-4-5 3-5 4 1 1 1 1zm-7.978-1L7 12.996c.001-.264.167-1.03.76-1.72C8.312 10.629 9.282 10 11 10c1.717 0 2.687.63 3.24 1.276.593.69.758 1.457.76 1.72l-.008.002-.014.002zM11 7a2 2 0 1 0 0-4 2 2 0 0 0 0 4m3-2a3 3 0 1 1-6 0 3 3 0 0 1 6 0M6.936 9.28a6 6 0 0 0-1.23-.247A7 7 0 0 0 5 9c-4 0-5 3-5 4q0 1 1 1h4.216A2.24 2.24 0 0 1 5 13c0-1.01.377-2.042 1.09-2.904.243-.294.526-.569.846-.816M4.92 10A5.5 5.5 0 0 0 4 13H1c0-.26.164-1.03.76-1.724.545-.636 1.492-1.256 3.16-1.275ZM1.5 5.5a3 3 0 1 1 6 0 3 3 0 0 1-6 0m3-2a2 2 0 1 0 0 4 2 2 0 0 0 0-4"/></svg>
<span class="t" style="left:126.00px;top:316.00px;font-size:22.00px;line-height:22.00px;color:#4b5563;letter-spacing:1.075px;-webkit-text-stroke:1.04px #4b5563;">LEADS</span>
<svg viewBox="0 0 16 16" style="position:absolute;left:392.6px;top:316.1px;width:20.5px;height:20.5px;fill:#64748b;"><path fill-rule="evenodd" d="M1.646 4.646a.5.5 0 0 1 .708 0L8 10.293l5.646-5.647a.5.5 0 0 1 .708.708l-6 6a.5.5 0 0 1-.708 0l-6-6a.5.5 0 0 1 0-.708"/></svg>
<div style="position:absolute;left:32px;top:363.03px;width:406px;height:64.7px;background:#f8fafc;border-radius:18px;"></div>
<svg viewBox="0 0 16 16" style="position:absolute;left:64px;top:381.98px;width:28px;height:28px;fill:#4b5563;"><path fill-rule="evenodd" d="M0 5a2 2 0 0 1 2-2h7.5a2 2 0 0 1 1.983 1.738l3.11-1.382A1 1 0 0 1 16 4.269v7.462a1 1 0 0 1-1.406.913l-3.111-1.382A2 2 0 0 1 9.5 13H2a2 2 0 0 1-2-2zm11.5 5.175 3.5 1.556V4.269l-3.5 1.556zM2 4a1 1 0 0 0-1 1v6a1 1 0 0 0 1 1h7.5a1 1 0 0 0 1-1V5a1 1 0 0 0-1-1z"/></svg>
<span class="t" style="left:126.00px;top:385.00px;font-size:22.00px;line-height:22.00px;color:#4b5563;letter-spacing:1.000px;-webkit-text-stroke:1.04px #4b5563;">MEETINGS</span>
<svg viewBox="0 0 16 16" style="position:absolute;left:392.6px;top:385.13px;width:20.5px;height:20.5px;fill:#64748b;"><path fill-rule="evenodd" d="M1.646 4.646a.5.5 0 0 1 .708 0L8 10.293l5.646-5.647a.5.5 0 0 1 .708.708l-6 6a.5.5 0 0 1-.708 0l-6-6a.5.5 0 0 1 0-.708"/></svg>
<div style="position:absolute;left:32px;top:432.06px;width:406px;height:64.7px;background:#f8fafc;border-radius:18px;"></div>
<svg viewBox="0 0 16 16" style="position:absolute;left:64px;top:451.01px;width:28px;height:28px;fill:#4b5563;"><path d="M3 14.5A1.5 1.5 0 0 1 1.5 13V3A1.5 1.5 0 0 1 3 1.5h8a.5.5 0 0 1 0 1H3a.5.5 0 0 0-.5.5v10a.5.5 0 0 0 .5.5h10a.5.5 0 0 0 .5-.5V8a.5.5 0 0 1 1 0v5a1.5 1.5 0 0 1-1.5 1.5z"/><path d="m8.354 10.354 7-7a.5.5 0 0 0-.708-.708L8 9.293 5.354 6.646a.5.5 0 1 0-.708.708l3 3a.5.5 0 0 0 .708 0"/></svg>
<span class="t" style="left:127.00px;top:454.00px;font-size:22.00px;line-height:22.00px;color:#4b5563;letter-spacing:1.200px;-webkit-text-stroke:1.04px #4b5563;">TASKS</span>
<svg viewBox="0 0 16 16" style="position:absolute;left:392.6px;top:454.16px;width:20.5px;height:20.5px;fill:#64748b;"><path fill-rule="evenodd" d="M1.646 4.646a.5.5 0 0 1 .708 0L8 10.293l5.646-5.647a.5.5 0 0 1 .708.708l-6 6a.5.5 0 0 1-.708 0l-6-6a.5.5 0 0 1 0-.708"/></svg>
<div style="position:absolute;left:32px;top:501.09px;width:406px;height:64.7px;background:#f8fafc;border-radius:18px;"></div>
<svg viewBox="0 0 16 16" style="position:absolute;left:64px;top:520.04px;width:28px;height:28px;fill:#4b5563;"><path d="M8 7.982C9.664 6.309 13.825 9.236 8 13 2.175 9.236 6.336 6.31 8 7.982"/><path d="M3.75 0a1 1 0 0 0-.8.4L.1 4.2a.5.5 0 0 0-.1.3V15a1 1 0 0 0 1 1h14a1 1 0 0 0 1-1V4.5a.5.5 0 0 0-.1-.3L13.05.4a1 1 0 0 0-.8-.4zm0 1H7.5v3h-6zM8.5 4V1h3.75l2.25 3zM15 5v10H1V5z"/></svg>
<span class="t" style="left:126.00px;top:523.00px;font-size:22.00px;line-height:22.00px;color:#4b5563;letter-spacing:1.050px;-webkit-text-stroke:1.04px #4b5563;">SAMPLES</span>
<svg viewBox="0 0 16 16" style="position:absolute;left:392.6px;top:523.19px;width:20.5px;height:20.5px;fill:#64748b;"><path fill-rule="evenodd" d="M1.646 4.646a.5.5 0 0 1 .708 0L8 10.293l5.646-5.647a.5.5 0 0 1 .708.708l-6 6a.5.5 0 0 1-.708 0l-6-6a.5.5 0 0 1 0-.708"/></svg>
<div style="position:absolute;left:32px;top:570.12px;width:406px;height:64.7px;background:#f8fafc;border-radius:18px;"></div>
<svg viewBox="0 0 16 16" style="position:absolute;left:64px;top:589.07px;width:28px;height:28px;fill:#4b5563;"><path d="M7.068.727c.243-.97 1.62-.97 1.864 0l.071.286a.96.96 0 0 0 1.622.434l.205-.211c.695-.719 1.888-.03 1.613.931l-.08.284a.96.96 0 0 0 1.187 1.187l.283-.081c.96-.275 1.65.918.931 1.613l-.211.205a.96.96 0 0 0 .434 1.622l.286.071c.97.243.97 1.62 0 1.864l-.286.071a.96.96 0 0 0-.434 1.622l.211.205c.719.695.03 1.888-.931 1.613l-.284-.08a.96.96 0 0 0-1.187 1.187l.081.283c.275.96-.918 1.65-1.613.931l-.205-.211a.96.96 0 0 0-1.622.434l-.071.286c-.243.97-1.62.97-1.864 0l-.071-.286a.96.96 0 0 0-1.622-.434l-.205.211c-.695.719-1.888.03-1.613-.931l.08-.284a.96.96 0 0 0-1.186-1.187l-.284.081c-.96.275-1.65-.918-.931-1.613l.211-.205a.96.96 0 0 0-.434-1.622l-.286-.071c-.97-.243-.97-1.62 0-1.864l.286-.071a.96.96 0 0 0 .434-1.622l-.211-.205c-.719-.695-.03-1.888.931-1.613l.284.08a.96.96 0 0 0 1.187-1.186l-.081-.284c-.275-.96.918-1.65 1.613-.931l.205.211a.96.96 0 0 0 1.622-.434zM12.973 8.5H8.25l-2.834 3.779A4.998 4.998 0 0 0 12.973 8.5m0-1a4.998 4.998 0 0 0-7.557-3.779l2.834 3.78zM5.048 3.967l-.087.065zm-.431.355A4.98 4.98 0 0 0 3.002 8c0 1.455.622 2.765 1.615 3.678L7.375 8zm.344 7.646.087.065z"/></svg>
<span class="t" style="left:125.99px;top:592.00px;font-size:22.00px;line-height:22.00px;color:#4b5563;letter-spacing:1.210px;transform:scaleX(1.0053);-webkit-text-stroke:1.04px #4b5563;">MANUFACTURING</span>
<svg viewBox="0 0 16 16" style="position:absolute;left:392.6px;top:592.22px;width:20.5px;height:20.5px;fill:#64748b;"><path fill-rule="evenodd" d="M1.646 4.646a.5.5 0 0 1 .708 0L8 10.293l5.646-5.647a.5.5 0 0 1 .708.708l-6 6a.5.5 0 0 1-.708 0l-6-6a.5.5 0 0 1 0-.708"/></svg>
<div style="position:absolute;left:32px;top:639.15px;width:406px;height:64.7px;background:#f8fafc;border-radius:18px;"></div>
<svg viewBox="0 0 16 16" style="position:absolute;left:64px;top:658.1px;width:28px;height:28px;fill:#4b5563;"><path d="M2.97 1.35A1 1 0 0 1 3.73 1h8.54a1 1 0 0 1 .76.35l2.609 3.044A1.5 1.5 0 0 1 16 5.37v.255a2.375 2.375 0 0 1-4.25 1.458A2.37 2.37 0 0 1 9.875 8 2.37 2.37 0 0 1 8 7.083 2.37 2.37 0 0 1 6.125 8a2.37 2.37 0 0 1-1.875-.917A2.375 2.375 0 0 1 0 5.625V5.37a1.5 1.5 0 0 1 .361-.976zm1.78 4.275a1.375 1.375 0 0 0 2.75 0 .5.5 0 0 1 1 0 1.375 1.375 0 0 0 2.75 0 .5.5 0 0 1 1 0 1.375 1.375 0 1 0 2.75 0V5.37a.5.5 0 0 0-.12-.325L12.27 2H3.73L1.12 5.045A.5.5 0 0 0 1 5.37v.255a1.375 1.375 0 0 0 2.75 0 .5.5 0 0 1 1 0M1.5 8.5A.5.5 0 0 1 2 9v6h12V9a.5.5 0 0 1 1 0v6h.5a.5.5 0 0 1 0 1H.5a.5.5 0 0 1 0-1H1V9a.5.5 0 0 1 .5-.5m2 .5a.5.5 0 0 1 .5.5V13h8V9.5a.5.5 0 0 1 1 0V13a1 1 0 0 1-1 1H4a1 1 0 0 1-1-1V9.5a.5.5 0 0 1 .5-.5"/></svg>
<span class="t" style="left:126.00px;top:661.00px;font-size:22.00px;line-height:22.00px;color:#4b5563;letter-spacing:0.200px;-webkit-text-stroke:1.04px #4b5563;">STORE</span>
<svg viewBox="0 0 16 16" style="position:absolute;left:392.6px;top:661.25px;width:20.5px;height:20.5px;fill:#64748b;"><path fill-rule="evenodd" d="M1.646 4.646a.5.5 0 0 1 .708 0L8 10.293l5.646-5.647a.5.5 0 0 1 .708.708l-6 6a.5.5 0 0 1-.708 0l-6-6a.5.5 0 0 1 0-.708"/></svg>
<div style="position:absolute;left:32px;top:708.18px;width:406px;height:64.7px;background:#f8fafc;border-radius:18px;"></div>
<svg viewBox="0 0 16 16" style="position:absolute;left:64px;top:727.13px;width:28px;height:28px;fill:#4b5563;"><path d="M7.752.066a.5.5 0 0 1 .496 0l3.75 2.143a.5.5 0 0 1 .252.434v3.995l3.498 2A.5.5 0 0 1 16 9.07v4.286a.5.5 0 0 1-.252.434l-3.75 2.143a.5.5 0 0 1-.496 0l-3.502-2-3.502 2.001a.5.5 0 0 1-.496 0l-3.75-2.143A.5.5 0 0 1 0 13.357V9.071a.5.5 0 0 1 .252-.434L3.75 6.638V2.643a.5.5 0 0 1 .252-.434zM4.25 7.504 1.508 9.071l2.742 1.567 2.742-1.567zM7.5 9.933l-2.75 1.571v3.134l2.75-1.571zm1 3.134 2.75 1.571v-3.134L8.5 9.933zm.508-3.996 2.742 1.567 2.742-1.567-2.742-1.567zm2.242-2.433V3.504L8.5 5.076V8.21zM7.5 8.21V5.076L4.75 3.504v3.134zM5.258 2.643 8 4.21l2.742-1.567L8 1.076zM15 9.933l-2.75 1.571v3.134L15 13.067zM3.75 14.638v-3.134L1 9.933v3.134z"/></svg>
<span class="t" style="left:125.00px;top:730.00px;font-size:22.00px;line-height:22.00px;color:#4b5563;letter-spacing:1.150px;-webkit-text-stroke:1.04px #4b5563;">INVENTORY</span>
<svg viewBox="0 0 16 16" style="position:absolute;left:392.6px;top:730.28px;width:20.5px;height:20.5px;fill:#64748b;"><path fill-rule="evenodd" d="M1.646 4.646a.5.5 0 0 1 .708 0L8 10.293l5.646-5.647a.5.5 0 0 1 .708.708l-6 6a.5.5 0 0 1-.708 0l-6-6a.5.5 0 0 1 0-.708"/></svg>
<div style="position:absolute;left:32px;top:777.21px;width:406px;height:64.7px;background:#f8fafc;border-radius:18px;"></div>
<svg viewBox="0 0 16 16" style="position:absolute;left:64px;top:796.16px;width:28px;height:28px;fill:#4b5563;"><path d="M8.235 1.559a.5.5 0 0 0-.47 0l-7.5 4a.5.5 0 0 0 0 .882L3.188 8 .264 9.559a.5.5 0 0 0 0 .882l7.5 4a.5.5 0 0 0 .47 0l7.5-4a.5.5 0 0 0 0-.882L12.813 8l2.922-1.559a.5.5 0 0 0 0-.882zm3.515 7.008L14.438 10 8 13.433 1.562 10 4.25 8.567l3.515 1.874a.5.5 0 0 0 .47 0zM8 9.433 1.562 6 8 2.567 14.438 6z"/></svg>
<span class="t" style="left:125.98px;top:799.00px;font-size:22.00px;line-height:22.00px;color:#4b5563;letter-spacing:1.210px;transform:scaleX(1.0151);-webkit-text-stroke:1.04px #4b5563;">MANAGE BOM</span>
<svg viewBox="0 0 16 16" style="position:absolute;left:392.6px;top:799.31px;width:20.5px;height:20.5px;fill:#64748b;"><path fill-rule="evenodd" d="M1.646 4.646a.5.5 0 0 1 .708 0L8 10.293l5.646-5.647a.5.5 0 0 1 .708.708l-6 6a.5.5 0 0 1-.708 0l-6-6a.5.5 0 0 1 0-.708"/></svg>
<div style="position:absolute;left:32px;top:846.24px;width:406px;height:64.7px;background:#f8fafc;border-radius:18px;"></div>
<svg viewBox="0 0 16 16" style="position:absolute;left:64px;top:865.19px;width:28px;height:28px;fill:#4b5563;"><path d="M0 2.5A.5.5 0 0 1 .5 2H2a.5.5 0 0 1 .485.379L2.89 4H14.5a.5.5 0 0 1 .485.621l-1.5 6A.5.5 0 0 1 13 11H4a.5.5 0 0 1-.485-.379L1.61 3H.5a.5.5 0 0 1-.5-.5M3.14 5l.5 2H5V5zM6 5v2h2V5zm3 0v2h2V5zm3 0v2h1.36l.5-2zm1.11 3H12v2h.61zM11 8H9v2h2zM8 8H6v2h2zM5 8H3.89l.5 2H5zm0 5a1 1 0 1 0 0 2 1 1 0 0 0 0-2m-2 1a2 2 0 1 1 4 0 2 2 0 0 1-4 0m9-1a1 1 0 1 0 0 2 1 1 0 0 0 0-2m-2 1a2 2 0 1 1 4 0 2 2 0 0 1-4 0"/></svg>
<span class="t" style="left:126.00px;top:868.00px;font-size:22.00px;line-height:22.00px;color:#4b5563;letter-spacing:0.800px;-webkit-text-stroke:1.04px #4b5563;">SALES</span>
<svg viewBox="0 0 16 16" style="position:absolute;left:392.6px;top:868.34px;width:20.5px;height:20.5px;fill:#64748b;"><path fill-rule="evenodd" d="M1.646 4.646a.5.5 0 0 1 .708 0L8 10.293l5.646-5.647a.5.5 0 0 1 .708.708l-6 6a.5.5 0 0 1-.708 0l-6-6a.5.5 0 0 1 0-.708"/></svg>
<div style="position:absolute;left:32px;top:915.27px;width:406px;height:64.7px;background:#f8fafc;border-radius:18px;"></div>
<svg viewBox="0 0 16 16" style="position:absolute;left:64px;top:934.22px;width:28px;height:28px;fill:#4b5563;"><path d="M4.318 2.687C5.234 2.271 6.536 2 8 2s2.766.27 3.682.687C12.644 3.125 13 3.627 13 4c0 .374-.356.875-1.318 1.313C10.766 5.729 9.464 6 8 6s-2.766-.27-3.682-.687C3.356 4.875 3 4.373 3 4c0-.374.356-.875 1.318-1.313M13 5.698V7c0 .374-.356.875-1.318 1.313C10.766 8.729 9.464 9 8 9s-2.766-.27-3.682-.687C3.356 7.875 3 7.373 3 7V5.698c.271.202.58.378.904.525C4.978 6.711 6.427 7 8 7s3.022-.289 4.096-.777A5 5 0 0 0 13 5.698M14 4c0-1.007-.875-1.755-1.904-2.223C11.022 1.289 9.573 1 8 1s-3.022.289-4.096.777C2.875 2.245 2 2.993 2 4v9c0 1.007.875 1.755 1.904 2.223C4.978 15.71 6.427 16 8 16s3.022-.289 4.096-.777C13.125 14.755 14 14.007 14 13zm-1 4.698V10c0 .374-.356.875-1.318 1.313C10.766 11.729 9.464 12 8 12s-2.766-.27-3.682-.687C3.356 10.875 3 10.373 3 10V8.698c.271.202.58.378.904.525C4.978 9.71 6.427 10 8 10s3.022-.289 4.096-.777A5 5 0 0 0 13 8.698m0 3V13c0 .374-.356.875-1.318 1.313C10.766 14.729 9.464 15 8 15s-2.766-.27-3.682-.687C3.356 13.875 3 13.373 3 13v-1.302c.271.202.58.378.904.525C4.978 12.71 6.427 13 8 13s3.022-.289 4.096-.777c.324-.147.633-.323.904-.525"/></svg>
<span class="t" style="left:126.00px;top:937.00px;font-size:22.00px;line-height:22.00px;color:#4b5563;letter-spacing:0.983px;-webkit-text-stroke:1.04px #4b5563;">MASTERS</span>
<svg viewBox="0 0 16 16" style="position:absolute;left:392.6px;top:937.37px;width:20.5px;height:20.5px;fill:#64748b;"><path fill-rule="evenodd" d="M1.646 4.646a.5.5 0 0 1 .708 0L8 10.293l5.646-5.647a.5.5 0 0 1 .708.708l-6 6a.5.5 0 0 1-.708 0l-6-6a.5.5 0 0 1 0-.708"/></svg>
<div style="position:absolute;left:32px;top:984.3px;width:406px;height:64.7px;background:#eef2ff;border-radius:18px;border-left:6px solid #6b8af7;box-sizing:border-box;"></div>
<svg viewBox="0 0 16 16" style="position:absolute;left:64px;top:1003.25px;width:28px;height:28px;fill:#4f46e5;"><path fill-rule="evenodd" d="M0 0h1v15h15v1H0zm10 3.5a.5.5 0 0 1 .5-.5h4a.5.5 0 0 1 .5.5v4a.5.5 0 0 1-1 0V4.9l-3.613 4.417a.5.5 0 0 1-.74.037L7.06 6.767l-3.656 5.027a.5.5 0 0 1-.808-.588l4-5.5a.5.5 0 0 1 .758-.06l2.609 2.61L13.445 4H10.5a.5.5 0 0 1-.5-.5"/></svg>
<span class="t" style="left:126.00px;top:1006.00px;font-size:22.00px;line-height:22.00px;color:#4f46e5;letter-spacing:0.300px;-webkit-text-stroke:1.04px #4f46e5;">REPORTS</span>
<svg viewBox="0 0 16 16" style="position:absolute;left:392.6px;top:1006.4px;width:20.5px;height:20.5px;fill:#6366f1;"><path fill-rule="evenodd" d="M7.646 4.646a.5.5 0 0 1 .708 0l6 6a.5.5 0 0 1-.708.708L8 5.707l-5.646 5.647a.5.5 0 0 1-.708-.708z"/></svg>
<div style="position:absolute;left:56px;top:1064.8px;width:4.2px;height:64.9px;background:#e3e7f1;"></div>
<svg viewBox="0 0 16 16" style="position:absolute;left:117.8px;top:1083.1px;width:28px;height:28px;fill:#64748b;"><path d="M5 8a1 1 0 1 1-2 0 1 1 0 0 1 2 0m4 0a1 1 0 1 1-2 0 1 1 0 0 1 2 0m3 1a1 1 0 1 0 0-2 1 1 0 0 0 0 2"/><path d="m2.165 15.803.02-.004c1.83-.363 2.948-.842 3.468-1.105A9 9 0 0 0 8 15c4.418 0 8-3.134 8-7s-3.582-7-8-7-8 3.134-8 7c0 1.76.743 3.37 1.97 4.6a10.4 10.4 0 0 1-.524 2.318l-.003.011a11 11 0 0 1-.244.637c-.079.186.074.394.273.362a22 22 0 0 0 .693-.125m.8-3.108a1 1 0 0 0-.287-.801C1.618 10.830 1 9.468 1 8c0-3.192 3.004-6 7-6s7 2.808 7 6-3.004 6-7 6a8 8 0 0 1-2.088-.272 1 1 0 0 0-.711.074c-.387.196-1.240.570-2.634.893a11 11 0 0 0 .398-2"/></svg>
<span class="t" style="left:163.12px;top:1086.00px;font-size:23.40px;line-height:23.40px;color:#64748b;transform:scaleX(1.0879);-webkit-text-stroke:0.3px #64748b;">NL Search</span>
<div style="position:absolute;left:335.9px;top:1077.1px;width:62px;height:40.7px;background:#0d6efd;border-radius:20.4px;"></div>
<span class="t" style="left:356.60px;top:1088.00px;font-size:19.20px;line-height:19.20px;color:#fff;font-weight:700;transform:scaleX(1.1222);">AI</span>
<div style="position:absolute;left:56px;top:1134.2px;width:4.2px;height:59.5px;background:#e3e7f1;"></div>
<span class="t" style="left:115.89px;top:1153.00px;font-size:23.40px;line-height:23.40px;color:#64748b;transform:scaleX(1.1067);-webkit-text-stroke:0.3px #64748b;">Order Predictions</span>
<div style="position:absolute;left:56px;top:1198.3px;width:4.2px;height:59.1px;background:#e3e7f1;"></div>
<span class="t" style="left:114.84px;top:1217.00px;font-size:23.40px;line-height:23.40px;color:#64748b;transform:scaleX(1.0818);-webkit-text-stroke:0.3px #64748b;">P/L Report</span>
<div style="position:absolute;left:56px;top:1261.9px;width:366.3px;height:59.6px;background:#eff2ff;border-left:4.2px solid #6284f0;border-radius:0 16px 16px 0;box-sizing:border-box;box-shadow:0 8px 28px rgba(102,126,234,.32);"></div>
<span class="t" style="left:115.91px;top:1281.00px;font-size:23.40px;line-height:23.40px;color:#4f46e5;transform:scaleX(1.0876);-webkit-text-stroke:1.09px #4f46e5;">Sales Item Report</span>
<div style="position:absolute;left:56px;top:1326px;width:4.2px;height:59px;background:#e3e7f1;"></div>
<span class="t" style="left:115.89px;top:1345.00px;font-size:23.40px;line-height:23.40px;color:#64748b;transform:scaleX(1.1064);-webkit-text-stroke:0.3px #64748b;">Consistency Report</span>
<div style="position:absolute;left:56px;top:1390px;width:4.2px;height:59px;background:#e3e7f1;"></div>
<span class="t" style="left:114.79px;top:1409.00px;font-size:23.40px;line-height:23.40px;color:#64748b;transform:scaleX(1.1053);-webkit-text-stroke:0.3px #64748b;">Performance Report</span>
<div style="position:absolute;left:56px;top:1454px;width:4.2px;height:59px;background:#e3e7f1;"></div>
<span class="t" style="left:117.00px;top:1473.00px;font-size:23.40px;line-height:23.40px;color:#64748b;transform:scaleX(1.1030);-webkit-text-stroke:0.3px #64748b;">Team Performance</span>
<div style="position:absolute;left:56px;top:1518.4px;width:4.2px;height:59px;background:#e3e7f1;"></div>
<span class="t" style="left:114.75px;top:1537.00px;font-size:23.40px;line-height:23.40px;color:#64748b;transform:scaleX(1.1260);-webkit-text-stroke:0.3px #64748b;">Productivity Report</span>
<div style="position:absolute;left:32px;top:1592px;width:406px;height:64.6px;background:#f8fafc;border-radius:18px;"></div>
<div style="position:absolute;left:0px;top:0px;width:2926px;height:10px;background:#353b4d;"></div>
</body></html>
